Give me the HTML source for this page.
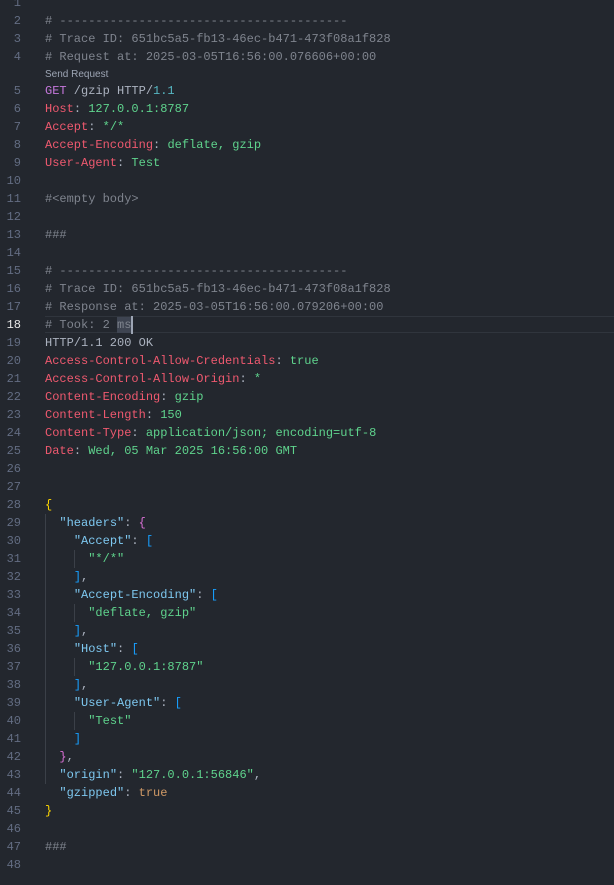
<!DOCTYPE html>
<html><head><meta charset="utf-8"><style>
html,body{margin:0;padding:0;background:#23272e;width:614px;height:885px;overflow:hidden}
#ed{position:relative;width:614px;height:885px;font-family:"Liberation Mono",monospace;font-size:12px}
.l{position:absolute;left:0;height:18px;line-height:18px;width:614px;white-space:pre}
.n{position:absolute;left:0;width:21px;text-align:right;color:#636d83}
.t{position:absolute;left:45px;color:#abb2bf}
.c{color:#7f848e}.r{color:#ef596f}.g{color:#5fd38d}.p{color:#c678dd}.cy{color:#56b6c2}
.k{color:#7ec8f0}.y{color:#ffd700}.b{color:#179fff}.m{color:#da70d6}.o{color:#d19a66}
.lens{position:absolute;left:45px;top:67px;height:16px;line-height:16px;font-family:"Liberation Sans",sans-serif;font-size:10px;color:#9da5b4}
.gd{position:absolute;width:1px;background:#3b4048}
</style></head><body><div id="ed">
<div class="lens">Send Request</div>
<div style="position:absolute;left:45px;top:316px;width:569px;height:17px;border-top:1px solid #30353d;border-bottom:1px solid #30353d;box-sizing:border-box"></div>
<div style="position:absolute;left:117px;top:317px;width:15px;height:16px;background:#3e4451"></div>
<div style="position:absolute;left:131px;top:316px;width:2px;height:18px;background:#9da5b4"></div>
<div class="gd" style="left:45px;top:514px;height:270px"></div>
<div class="gd" style="left:74px;top:550px;height:18px"></div>
<div class="gd" style="left:74px;top:604px;height:18px"></div>
<div class="gd" style="left:74px;top:658px;height:18px"></div>
<div class="gd" style="left:74px;top:712px;height:18px"></div>
<div id="lines"></div>
</div>
<script>
var L=[
'','<span class="c"># ----------------------------------------</span>',
'<span class="c"># Trace ID: 651bc5a5-fb13-46ec-b471-473f08a1f828</span>',
'<span class="c"># Request at: 2025-03-05T16:56:00.076606+00:00</span>',
'<span class="p">GET</span> /gzip HTTP/<span class="cy">1.1</span>',
'<span class="r">Host</span>: <span class="g">127.0.0.1:8787</span>',
'<span class="r">Accept</span>: <span class="g">*/*</span>',
'<span class="r">Accept-Encoding</span>: <span class="g">deflate, gzip</span>',
'<span class="r">User-Agent</span>: <span class="g">Test</span>',
'','<span class="c">#&lt;empty body&gt;</span>','','<span class="c">###</span>','',
'<span class="c"># ----------------------------------------</span>',
'<span class="c"># Trace ID: 651bc5a5-fb13-46ec-b471-473f08a1f828</span>',
'<span class="c"># Response at: 2025-03-05T16:56:00.079206+00:00</span>',
'<span class="c"># Took: 2 ms</span>',
'HTTP/1.1 200 OK',
'<span class="r">Access-Control-Allow-Credentials</span>: <span class="g">true</span>',
'<span class="r">Access-Control-Allow-Origin</span>: <span class="g">*</span>',
'<span class="r">Content-Encoding</span>: <span class="g">gzip</span>',
'<span class="r">Content-Length</span>: <span class="g">150</span>',
'<span class="r">Content-Type</span>: <span class="g">application/json; encoding=utf-8</span>',
'<span class="r">Date</span>: <span class="g">Wed, 05 Mar 2025 16:56:00 GMT</span>',
'','',
'<span class="y">{</span>',
'  <span class="k">"headers"</span>: <span class="m">{</span>',
'    <span class="k">"Accept"</span>: <span class="b">[</span>',
'      <span class="g">"*/*"</span>',
'    <span class="b">]</span>,',
'    <span class="k">"Accept-Encoding"</span>: <span class="b">[</span>',
'      <span class="g">"deflate, gzip"</span>',
'    <span class="b">]</span>,',
'    <span class="k">"Host"</span>: <span class="b">[</span>',
'      <span class="g">"127.0.0.1:8787"</span>',
'    <span class="b">]</span>,',
'    <span class="k">"User-Agent"</span>: <span class="b">[</span>',
'      <span class="g">"Test"</span>',
'    <span class="b">]</span>',
'  <span class="m">}</span>,',
'  <span class="k">"origin"</span>: <span class="g">"127.0.0.1:56846"</span>,',
'  <span class="k">"gzipped"</span>: <span class="o">true</span>',
'<span class="y">}</span>','','<span class="c">###</span>',''];
(function(){
var h='';
for(var i=0;i<L.length;i++){var n=i+1;var yy=n<=4?-6+(n-1)*18:82+(n-5)*18;
h+='<div class="l" style="top:'+yy+'px"><span class="n"'+(n==18?' style="color:#e6e6e6"':'')+'>'+n+'</span><span class="t">'+L[i]+'</span></div>';}
document.getElementById('lines').innerHTML=h;
})();
</script>
</body></html>
